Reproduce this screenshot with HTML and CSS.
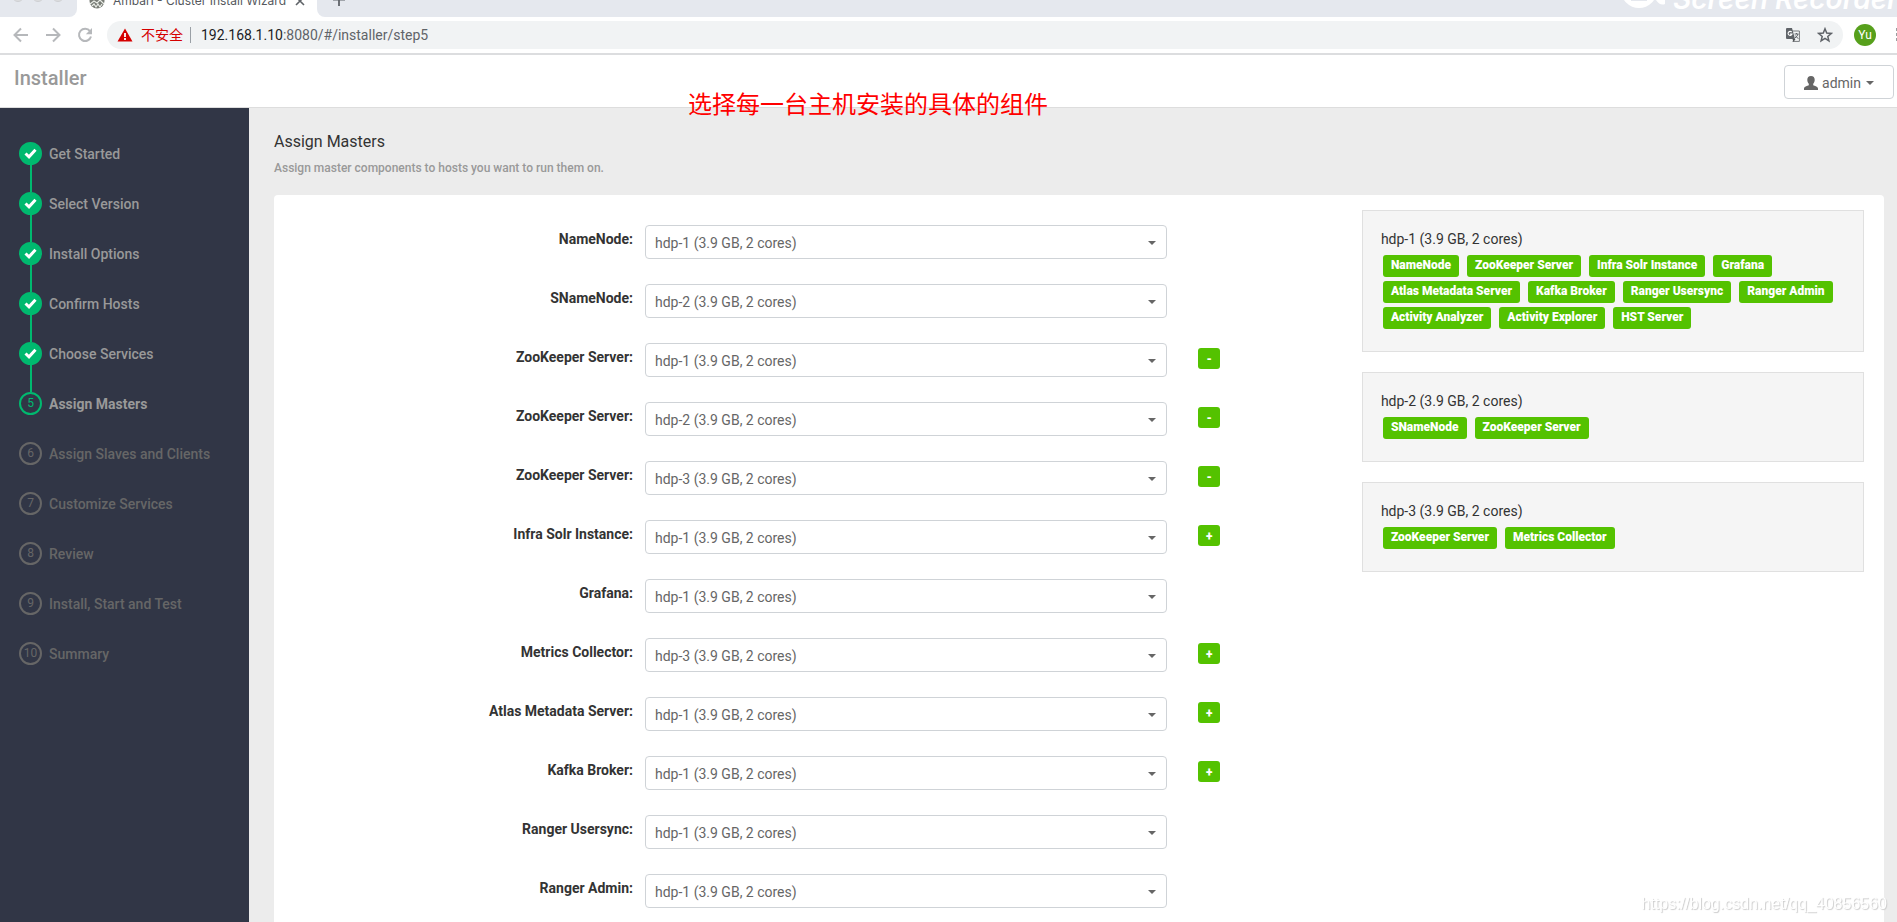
FILE: index.html
```html
<!DOCTYPE html>
<html lang="en">
<head>
<meta charset="utf-8">
<title>Ambari - Cluster Install Wizard</title>
<link rel="stylesheet" href="styles.css">
</head>
<body>
<div class="tab-strip">
  <div class="window-controls"><span class="dot"></span><span class="dot"></span><span class="dot"></span></div>
  <div class="tab">
    <svg class="favicon" width="16" height="16" viewBox="0 0 16 16"><circle cx="8" cy="8" r="7.5" fill="#777b75"/><path d="M1 11l4-3 3 2 3-3 4 4M3 13l2-2 2 3 2-3 2 3 2-3" fill="none" stroke="#e9ece6" stroke-width="1.2"/></svg>
    <span class="tab-title">Ambari - Cluster Install Wizard</span>
    <svg width="10" height="16" viewBox="0 0 10 16"><path d="M1 4l8 8M9 4l-8 8" stroke="#5f6368" stroke-width="1.6"/></svg>
  </div>
  <div class="tab-rest">
    <svg width="14" height="16" viewBox="0 0 14 16"><path d="M7 1v13M1 7.500h12" stroke="#5f6368" stroke-width="1.800"/></svg>
    <div class="recorder">
      <svg width="46" height="36" viewBox="0 0 46 36"><circle cx="18" cy="18" r="18" fill="#fff"/><path d="M35 28l9-8v12q-5 2-9-4z" fill="#fff"/><path d="M10 28h16" stroke="#e5e8ee" stroke-width="2"/></svg>
      <span>Screen Recorder</span>
    </div>
  </div>
</div>

<div class="toolbar">
  <button class="nav-btn" aria-label="Back"><svg width="16" height="16" viewBox="0 0 16 16"><path d="M15 8H2M8 1.500L1.500 8 8 14.500" fill="none" stroke="#b6b8bb" stroke-width="2"/></svg></button>
  <button class="nav-btn" aria-label="Forward"><svg width="16" height="16" viewBox="0 0 16 16"><path d="M1 8h13M8 1.500L14.500 8 8 14.500" fill="none" stroke="#b6b8bb" stroke-width="2"/></svg></button>
  <button class="nav-btn" aria-label="Reload"><svg width="16" height="16" viewBox="0 0 16 16"><path d="M13 4.200A6.100 6.100 0 1 0 14 9.500" fill="none" stroke="#b6b8bb" stroke-width="2"/><path d="M15 1v6.200H8.800z" fill="#b6b8bb"/></svg></button>
  <div class="address">
    <svg width="16" height="14" viewBox="0 0 16 14"><path d="M8 .5L15.500 13.500H.5z" fill="#d50000"/><path d="M8 5v4M8 10v2" stroke="#fff" stroke-width="1.800"/></svg>
    <span class="insecure">不安全</span>
    <span class="divider"></span>
    <span class="url"><b>192.168.1.10</b>:8080/#/installer/step5</span>
    <svg class="translate" width="14" height="14" viewBox="0 0 14 14"><path d="M6 3h7.400v10.400H6.500" fill="none" stroke="#777a7e"/><path d="M1 0h5l3 11H1Q0 11 0 10V1Q0 0 1 0z" fill="#5f6368"/><path d="M5.700 4.200A2 2 0 1 0 6 6H4" fill="none" stroke="#fff" stroke-width="1.100"/><path d="M6.500 11l1 3 2-3z" fill="#4b4e52"/><path d="M8.500 6H12.500M10.500 5v1M12 6q-.6 2.500-3 4M9.300 7.500l3 3.300" fill="none" stroke="#5f6368"/></svg>
    <svg width="16" height="16" viewBox="0 0 16 16"><path d="M8 1.800l1.700 4.300 4.600.3-3.500 3 1.100 4.500L8 11.400l-3.900 2.500 1.100-4.500-3.500-3 4.600-.3z" fill="none" stroke="#5f6368" stroke-width="1.500"/></svg>
  </div>
  <span class="avatar">Yu</span>
  <span class="kebab"></span>
</div>

<header class="app-header">
  <span class="brand">Installer</span>
  <button class="user-btn">
    <svg width="14" height="14" viewBox="0 0 14 14"><path d="M7 0c2.500 0 3.700 1.600 3.700 3.800 0 1.700-.6 3.100-1.500 4v1.400c1.500.8 4.800 1.300 4.800 3.400V14H0v-1.400c0-2.100 3.300-2.600 4.800-3.400V7.800c-.9-.9-1.500-2.300-1.500-4C3.300 1.600 4.500 0 7 0z" fill="#666"/></svg>
    <span>admin</span>
    <span class="caret"></span>
  </button>
  <p class="note">选择每一台主机安装的具体的组件</p>
</header>

<div class="layout">
  <nav class="sidebar">
    <ol class="steps">
      <li class="step done"><span class="mark"><svg width="13" height="11" viewBox="0 0 13 11"><path d="M1.500 5.500L5 8.800 11.500 1.800" fill="none" stroke="#fff" stroke-width="3"/></svg></span><span class="step-name">Get Started</span></li>
      <li class="step done"><span class="mark"><svg width="13" height="11" viewBox="0 0 13 11"><path d="M1.500 5.500L5 8.800 11.500 1.800" fill="none" stroke="#fff" stroke-width="3"/></svg></span><span class="step-name">Select Version</span></li>
      <li class="step done"><span class="mark"><svg width="13" height="11" viewBox="0 0 13 11"><path d="M1.500 5.500L5 8.800 11.500 1.800" fill="none" stroke="#fff" stroke-width="3"/></svg></span><span class="step-name">Install Options</span></li>
      <li class="step done"><span class="mark"><svg width="13" height="11" viewBox="0 0 13 11"><path d="M1.500 5.500L5 8.800 11.500 1.800" fill="none" stroke="#fff" stroke-width="3"/></svg></span><span class="step-name">Confirm Hosts</span></li>
      <li class="step done"><span class="mark"><svg width="13" height="11" viewBox="0 0 13 11"><path d="M1.500 5.500L5 8.800 11.500 1.800" fill="none" stroke="#fff" stroke-width="3"/></svg></span><span class="step-name">Choose Services</span></li>
      <li class="step current"><span class="mark">5</span><span class="step-name">Assign Masters</span></li>
      <li class="step"><span class="mark">6</span><span class="step-name">Assign Slaves and Clients</span></li>
      <li class="step"><span class="mark">7</span><span class="step-name">Customize Services</span></li>
      <li class="step"><span class="mark">8</span><span class="step-name">Review</span></li>
      <li class="step"><span class="mark">9</span><span class="step-name">Install, Start and Test</span></li>
      <li class="step"><span class="mark">10</span><span class="step-name">Summary</span></li>
    </ol>
  </nav>

  <main class="content">
    <h1 class="title">Assign Masters</h1>
    <p class="subtitle">Assign master components to hosts you want to run them on.</p>
    <div class="card">
      <form class="masters">
        <div class="row"><label for="m1">NameNode:</label><div class="pick"><select id="m1"><option selected>hdp-1 (3.9 GB, 2 cores)</option><option>hdp-2 (3.9 GB, 2 cores)</option><option>hdp-3 (3.9 GB, 2 cores)</option></select></div></div>
        <div class="row"><label for="m2">SNameNode:</label><div class="pick"><select id="m2"><option>hdp-1 (3.9 GB, 2 cores)</option><option selected>hdp-2 (3.9 GB, 2 cores)</option><option>hdp-3 (3.9 GB, 2 cores)</option></select></div></div>
        <div class="row"><label for="m3">ZooKeeper Server:</label><div class="pick"><select id="m3"><option selected>hdp-1 (3.9 GB, 2 cores)</option><option>hdp-2 (3.9 GB, 2 cores)</option><option>hdp-3 (3.9 GB, 2 cores)</option></select></div><button type="button" class="adjust">-</button></div>
        <div class="row"><label for="m4">ZooKeeper Server:</label><div class="pick"><select id="m4"><option>hdp-1 (3.9 GB, 2 cores)</option><option selected>hdp-2 (3.9 GB, 2 cores)</option><option>hdp-3 (3.9 GB, 2 cores)</option></select></div><button type="button" class="adjust">-</button></div>
        <div class="row"><label for="m5">ZooKeeper Server:</label><div class="pick"><select id="m5"><option>hdp-1 (3.9 GB, 2 cores)</option><option>hdp-2 (3.9 GB, 2 cores)</option><option selected>hdp-3 (3.9 GB, 2 cores)</option></select></div><button type="button" class="adjust">-</button></div>
        <div class="row"><label for="m6">Infra Solr Instance:</label><div class="pick"><select id="m6"><option selected>hdp-1 (3.9 GB, 2 cores)</option><option>hdp-2 (3.9 GB, 2 cores)</option><option>hdp-3 (3.9 GB, 2 cores)</option></select></div><button type="button" class="adjust">+</button></div>
        <div class="row"><label for="m7">Grafana:</label><div class="pick"><select id="m7"><option selected>hdp-1 (3.9 GB, 2 cores)</option><option>hdp-2 (3.9 GB, 2 cores)</option><option>hdp-3 (3.9 GB, 2 cores)</option></select></div></div>
        <div class="row"><label for="m8">Metrics Collector:</label><div class="pick"><select id="m8"><option>hdp-1 (3.9 GB, 2 cores)</option><option>hdp-2 (3.9 GB, 2 cores)</option><option selected>hdp-3 (3.9 GB, 2 cores)</option></select></div><button type="button" class="adjust">+</button></div>
        <div class="row"><label for="m9">Atlas Metadata Server:</label><div class="pick"><select id="m9"><option selected>hdp-1 (3.9 GB, 2 cores)</option><option>hdp-2 (3.9 GB, 2 cores)</option><option>hdp-3 (3.9 GB, 2 cores)</option></select></div><button type="button" class="adjust">+</button></div>
        <div class="row"><label for="m10">Kafka Broker:</label><div class="pick"><select id="m10"><option selected>hdp-1 (3.9 GB, 2 cores)</option><option>hdp-2 (3.9 GB, 2 cores)</option><option>hdp-3 (3.9 GB, 2 cores)</option></select></div><button type="button" class="adjust">+</button></div>
        <div class="row"><label for="m11">Ranger Usersync:</label><div class="pick"><select id="m11"><option selected>hdp-1 (3.9 GB, 2 cores)</option><option>hdp-2 (3.9 GB, 2 cores)</option><option>hdp-3 (3.9 GB, 2 cores)</option></select></div></div>
        <div class="row"><label for="m12">Ranger Admin:</label><div class="pick"><select id="m12"><option selected>hdp-1 (3.9 GB, 2 cores)</option><option>hdp-2 (3.9 GB, 2 cores)</option><option>hdp-3 (3.9 GB, 2 cores)</option></select></div></div>
      </form>

      <aside class="hosts">
        <section class="host">
          <h2>hdp-1 (3.9 GB, 2 cores)</h2>
          <div class="badges"><span class="badge">NameNode</span><span class="badge">ZooKeeper Server</span><span class="badge">Infra Solr Instance</span><span class="badge">Grafana</span><span class="badge">Atlas Metadata Server</span><span class="badge">Kafka Broker</span><span class="badge">Ranger Usersync</span><span class="badge">Ranger Admin</span><span class="badge">Activity Analyzer</span><span class="badge">Activity Explorer</span><span class="badge">HST Server</span></div>
        </section>
        <section class="host">
          <h2>hdp-2 (3.9 GB, 2 cores)</h2>
          <div class="badges"><span class="badge">SNameNode</span><span class="badge">ZooKeeper Server</span></div>
        </section>
        <section class="host">
          <h2>hdp-3 (3.9 GB, 2 cores)</h2>
          <div class="badges"><span class="badge">ZooKeeper Server</span><span class="badge">Metrics Collector</span></div>
        </section>
      </aside>
    </div>
  </main>
</div>
<div class="watermark">https://blog.csdn.net/qq_40856560</div>
</body>
</html>
```

FILE: styles.css
```css
* {
  box-sizing: border-box;
}

body {
  margin: 0;
  min-height: 100vh;
  display: flex;
  flex-direction: column;
  background: #fff;
  color: #333;
  font-family: Roboto, "Noto Sans CJK SC", sans-serif;
  font-size: 14px;
  line-height: 20px;
}

button,
select {
  font: inherit;
}

h1,
h2,
p,
ol {
  margin: 0;
  padding: 0;
  font-weight: 400;
}

/* Browser tabs */
.tab-strip {
  display: flex;
  height: 17px;
  overflow: hidden;
}

.window-controls,
.tab-rest {
  background: #e5e8ee;
  display: flex;
  align-items: flex-end;
}

.window-controls {
  width: 77px;
  padding: 0 0 15px 12px;
  gap: 8px;
  border-bottom-right-radius: 8px;
}

.dot {
  flex: none;
  width: 12px;
  height: 12px;
  border: 1px solid #cfd0d3;
  border-radius: 50%;
  background: #dcdddf;
}

.tab {
  width: 240px;
  display: flex;
  align-items: flex-end;
  padding: 0 12px 8px;
  font-family: Inter, Roboto, sans-serif;
  font-size: 12px;
  line-height: 16px;
  color: #55585d;
}

.tab svg {
  flex: none;
}

.tab-title {
  flex: 1;
  padding-left: 8px;
  white-space: nowrap;
}

.tab-rest {
  flex: 1;
  min-width: 0;
  justify-content: space-between;
  padding: 0 0 9px 15px;
  border-bottom-left-radius: 8px;
}

.recorder {
  flex: none;
  width: 276px;
  display: flex;
  align-items: flex-end;
  gap: 6px;
  font-family: Inter, sans-serif;
  font-size: 28px;
  line-height: 28px;
  font-weight: 600;
  font-style: italic;
  color: #fff;
  white-space: nowrap;
}

.recorder svg {
  flex: none;
}

.recorder span {
  margin-bottom: -5px;
}

/* Browser toolbar */
.toolbar {
  display: flex;
  align-items: center;
  height: 38px;
  padding-left: 13px;
  border-bottom: 2px solid #dcdddf;
  overflow: hidden;
}

.nav-btn {
  flex: none;
  display: flex;
  width: 32px;
  padding: 0;
  border: 0;
  background: none;
}

.address {
  flex: 1;
  display: flex;
  align-items: center;
  height: 28px;
  margin-left: -2px;
  padding: 0 10px;
  border-radius: 14px;
  background: #f1f3f4;
}

.insecure {
  margin-left: 8px;
  color: #d50000;
}

.divider {
  width: 1px;
  height: 16px;
  margin: 0 10px 0 7px;
  background: #9aa0a6;
}

.url {
  flex: 1;
  font-family: Roboto, sans-serif;
  color: #5f6368;
}

.url b {
  font-weight: 400;
  color: #202124;
}

.translate {
  margin-right: 17px;
}

.avatar {
  width: 22px;
  height: 22px;
  margin: 0 20px 0 11px;
  border-radius: 50%;
  background: #57a01c;
  color: #fff;
  font-size: 12px;
  line-height: 22px;
  text-align: center;
}

.kebab {
  width: 1px;
  height: 14px;
  background: repeating-linear-gradient(#9b9da0 0 3px, #fff 3px 5px);
}

/* Application header */
.app-header {
  position: relative;
  display: flex;
  align-items: center;
  justify-content: space-between;
  height: 53px;
  padding: 2px 3px 0 14px;
  border-bottom: 1px solid #ddd;
}

.brand {
  font-size: 20px;
  line-height: 28px;
  padding-bottom: 8px;
  color: #999;
  font-weight: 500;
}

.user-btn {
  display: flex;
  align-items: center;
  justify-content: center;
  gap: 4px;
  width: 110px;
  height: 34px;
  padding-top: 2px;
  border: 1px solid #cfd3d7;
  border-radius: 4px;
  background: #fff;
  color: #666;
}

.caret {
  margin-left: 1px;
  border: 4px solid transparent;
  border-top-color: #666;
  border-bottom: 0;
}

.note {
  position: absolute;
  left: 688px;
  top: 32px;
  font-size: 24px;
  line-height: 36px;
  color: #f00;
  white-space: nowrap;
}

/* Wizard steps */
.layout {
  flex: 1;
  display: flex;
}

.sidebar {
  flex: none;
  width: 249px;
  padding: 20px 0 0 19px;
  background: #313646;
}

.steps {
  list-style: none;
}

.step {
  position: relative;
  display: flex;
  align-items: center;
  gap: 7px;
  height: 50px;
  color: #666;
  font-weight: 500;
}

.step-name {
  padding-top: 2px;
}

.step.done,
.step.current {
  color: #999;
}

.step.current {
  font-weight: 700;
}

.mark {
  display: flex;
  align-items: center;
  justify-content: center;
  width: 23px;
  height: 23px;
  border: 2px solid #666;
  border-radius: 50%;
  font-size: 12px;
  font-weight: 400;
}

.done .mark {
  border-color: #00b96f;
  background: #00b96f;
}

.current .mark {
  border-color: #00b96f;
  color: #00b96f;
}

.step.done::after {
  content: "";
  position: absolute;
  left: 11px;
  top: 36px;
  width: 2px;
  height: 28px;
  background: #00b96f;
}

/* Main area */
.content {
  flex: 1;
  min-width: 0;
  display: flex;
  flex-direction: column;
  padding: 22px 13px 0 25px;
  background: #ececec;
}

.title {
  font-size: 16px;
  line-height: 24px;
}

.subtitle {
  margin: 5px 0 18px;
  font-size: 12px;
  line-height: 18px;
  color: #999;
  font-weight: 500;
}

.card {
  flex: 1;
  display: grid;
  grid-template-columns: 13fr 6fr;
  align-items: start;
  padding: 15px 20px 14px 0;
  border-radius: 4px 4px 0 0;
  background: #fff;
}

.masters {
  display: grid;
  gap: 25px;
  padding-top: 15px;
}

.row {
  display: grid;
  grid-template-columns: 33% 48% 1fr;
  column-gap: 12px;
  align-items: start;
}

.row label {
  padding-top: 4px;
  font-weight: 700;
  text-align: right;
}

.pick {
  position: relative;
}

.pick select {
  display: block;
  width: 100%;
  height: 34px;
  padding: 2px 30px 0 9px;
  border: 1px solid #cfd3d7;
  border-radius: 4px;
  background: #fff;
  color: #666;
  appearance: none;
}

.pick::after {
  content: "";
  position: absolute;
  right: 11px;
  top: 16px;
  border: 4px solid transparent;
  border-top-color: #666;
  border-bottom: 0;
  pointer-events: none;
}

.adjust {
  width: 22px;
  height: 21px;
  margin: 5px 0 0 19px;
  padding: 0;
  border: 0;
  border-radius: 3px;
  background: #54c200;
  color: #fff;
  font-size: 12px;
  font-weight: 900;
  line-height: 20px;
}

/* Host summary */
.hosts {
  display: grid;
  gap: 20px;
}

.host {
  padding: 18px 18px 22px;
  border: 1px solid #e0e0e0;
  background: #f5f5f5;
}

.host h2 {
  font-size: 14px;
  line-height: 20px;
}

.badges {
  display: flex;
  flex-wrap: wrap;
  gap: 4px 8px;
  padding: 6px 0 0 2px;
}

.badge {
  height: 22px;
  padding: 0 8px;
  border-radius: 3px;
  background: #54c200;
  color: #fff;
  font-size: 12px;
  font-weight: 900;
  line-height: 20px;
}

.watermark {
  position: fixed;
  right: 10px;
  bottom: 8px;
  font-family: "Liberation Sans", sans-serif;
  font-size: 16px;
  line-height: 20px;
  color: #fff;
  text-shadow: 1px 1px 1px #ccc;
}
```
